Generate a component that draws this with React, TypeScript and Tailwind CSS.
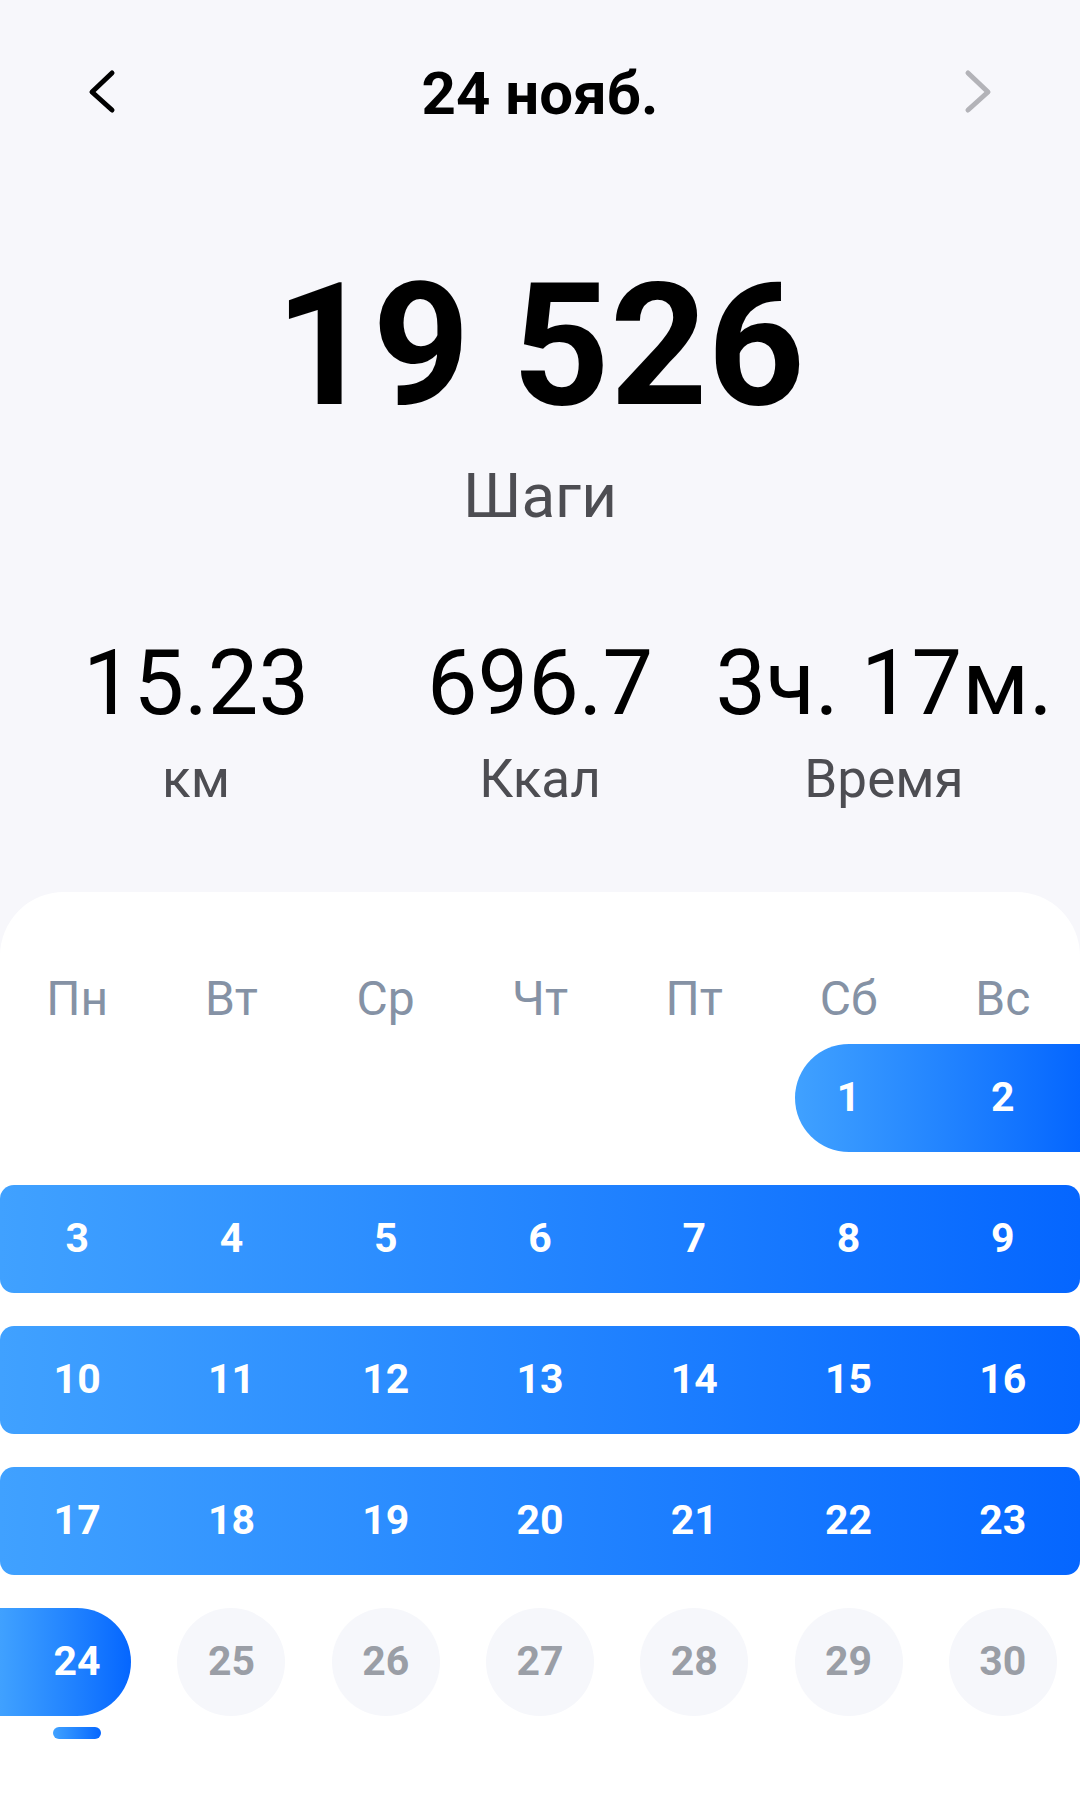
import React from "react";

const weekDays = ["Пн", "Вт", "Ср", "Чт", "Пт", "Сб", "Вс"];

const fullWeeks = [
	[3, 4, 5, 6, 7, 8, 9],
	[10, 11, 12, 13, 14, 15, 16],
	[17, 18, 19, 20, 21, 22, 23],
];

const restDays = [25, 26, 27, 28, 29, 30];

const stats = [
	{ value: "15.23", label: "км" },
	{ value: "696.7", label: "Ккал" },
	{ value: "3ч. 17м.", label: "Время" },
];

function Chevron({ right = false }: { right?: boolean }) {
	return (
		<svg
			width="28"
			height="44"
			viewBox="0 0 28 44"
			fill="none"
			className="overflow-visible"
			stroke={right ? "#b3b3b8" : "#000000"}
			strokeWidth="5"
			strokeLinecap="round"
			strokeLinejoin="round"
		>
			{right ? <path d="M4 1 L24 20 L4 38" /> : <path d="M24 1 L4 20 L24 38" />}
		</svg>
	);
}

export default function App() {
	return (
		<div className="min-h-[1795px] flex flex-col bg-[#f7f7fb] font-['Roboto','Noto_Sans',sans-serif]">
			{/* date switcher */}
			<header className="pt-[66px] px-[88px] flex items-center justify-between">
				<Chevron />
				<h1 className="text-[60px] leading-[56px] font-bold text-black">24 нояб.</h1>
				<Chevron right />
			</header>

			{/* steps */}
			<section className="mt-[139px] flex flex-col items-center">
				<div className="text-[170px] leading-[170px] font-bold text-black">19 526</div>
				<div className="mt-[34px] text-[62px] leading-[62px] text-[#4d4d52]">Шаги</div>
			</section>

			{/* distance / kcal / time */}
			<section className="mt-[112px] px-6 grid grid-cols-3">
				{stats.map((s) => (
					<div key={s.label} className="flex flex-col items-center">
						<div className="text-[90px] leading-[90px] text-black whitespace-nowrap">{s.value}</div>
						<div className="mt-[24px] text-[53px] leading-[52px] text-[#4d4d52]">{s.label}</div>
					</div>
				))}
			</section>

			{/* calendar */}
			<section className="mt-[87px] flex-1 bg-white rounded-t-[64px] pt-[83px]">
				<div className="grid grid-cols-7 text-center text-[48px] leading-[48px] text-[#8592a5]">
					{weekDays.map((d) => (
						<div key={d}>{d}</div>
					))}
				</div>

				<div className="mt-[21px] flex flex-col gap-[33px] text-[41px] font-bold">
					{/* first week: 1-2 */}
					<div className="grid grid-cols-7 h-[108px]">
						<div className="col-start-6 col-span-2 ml-[23.14px] flex items-center gap-[46.28px] rounded-l-full rounded-r-[14px] bg-linear-to-r from-[#40a1ff] to-[#0566ff] text-white">
							<span className="w-[108px] text-center">1</span>
							<span className="w-[108px] text-center">2</span>
						</div>
					</div>

					{fullWeeks.map((week) => (
						<div
							key={week[0]}
							className="grid grid-cols-7 h-[108px] items-center text-center rounded-[14px] bg-linear-to-r from-[#40a1ff] to-[#0566ff] text-white"
						>
							{week.map((d) => (
								<span key={d}>{d}</span>
							))}
						</div>
					))}

					{/* last week */}
					<div className="grid grid-cols-7 h-[108px]">
						<div className="w-[131.14px] h-full flex items-center justify-end rounded-l-[14px] rounded-r-full bg-linear-to-r from-[#40a1ff] to-[#0566ff] text-white">
							<span className="w-[108px] text-center">24</span>
						</div>
						{restDays.map((d) => (
							<div key={d} className="flex justify-center">
								<div className="w-[108px] h-[108px] rounded-full bg-[#f6f7fb] flex items-center justify-center text-[#9a9ea6]">
									{d}
								</div>
							</div>
						))}
					</div>
				</div>

				{/* today marker */}
				<div className="mt-[11px] grid grid-cols-7">
					<div className="flex justify-center">
						<div className="w-[48px] h-[12px] rounded-full bg-linear-to-r from-[#40a1ff] to-[#0566ff]" />
					</div>
				</div>
			</section>
		</div>
	);
}
